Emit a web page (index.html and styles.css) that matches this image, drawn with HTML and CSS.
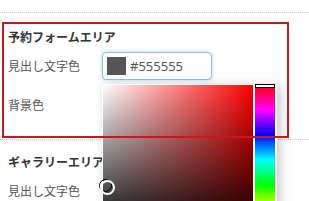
FILE: index.html
```html
<!DOCTYPE html>
<html>
	<head>
		<meta charset="utf-8">
		<title>デザイン設定</title>
		<link rel="stylesheet" href="styles.css">
	</head>
	<body>
		<div class="settings">
			<div class="section">
				<h3 class="title">予約フォームエリア</h3>
				<div class="row">
					<label class="label">見出し文字色</label>
					<div class="color">
						<span class="swatch" style="background:#555555"></span>
						<span class="value">#555555</span>
						<div class="picker">
							<div class="grid">
								<span class="grid-cursor" style="left:2px;top:100px"></span>
							</div>
							<div class="hue">
								<span class="hue-cursor"></span>
							</div>
						</div>
					</div>
				</div>
				<div class="row">
					<label class="label">背景色</label>
					<div class="color color-plain">
						<span class="swatch" style="background:#ffffff"></span>
						<span class="value">#ffffff</span>
					</div>
				</div>
			</div>
			<div class="section">
				<h3 class="title">ギャラリーエリア</h3>
				<div class="row">
					<label class="label">見出し文字色</label>
					<div class="color color-plain">
						<span class="swatch" style="background:#333333"></span>
						<span class="value">#333333</span>
					</div>
				</div>
			</div>
			<div class="mark"></div>
		</div>
	</body>
</html>
```

FILE: styles.css
```css
*{
	margin: 0px;
	padding: 0px;
	box-sizing: border-box;
}
body{
	background: #fff;
	font-family: "Noto Sans CJK JP", "Noto Sans", sans-serif;
	color: #555;
}
.settings{
	position: relative;
	padding-top: 12px;
	height: 201px;
	overflow: hidden;
}
.section{
	border-top: 1px dotted #c8c8c8;
	padding: 13px 8px 20px;
}
.section:first-child{
	padding-top: 15px;
}
.title{
	font-size: 12px;
	line-height: 18px;
	font-weight: bold;
	color: #333;
	margin-bottom: 6px;
}
.row{
	display: flex;
	align-items: center;
	margin-bottom: 11px;
}
.row:last-child{
	margin-bottom: 0;
}
.label{
	width: 94px;
	font-size: 12px;
	line-height: 18px;
}
.color{
	position: relative;
	width: 110px;
	height: 28px;
	border: 1px solid #8fbde6;
	border-radius: 4px;
	box-shadow: 0 0 4px rgba(102, 163, 224, .45);
	background: #fff;
	display: flex;
	align-items: center;
	padding-left: 4px;
}
.color-plain{
	border-color: #ccc;
	box-shadow: none;
}
.swatch{
	width: 19px;
	height: 18px;
	margin-right: 4px;
}
.value{
	font-family: "Noto Sans", sans-serif;
	font-size: 13px;
	color: #555;
}
.picker{
	position: absolute;
	left: -1px;
	top: 31px;
	z-index: 5;
	display: flex;
	gap: 2px;
	padding: 1px 2px 1px 1px;
	background: #fff;
	box-shadow: 3px 2px 10px rgba(0, 0, 0, .22);
}
.grid{
	position: relative;
	width: 150px;
	height: 150px;
	background: linear-gradient(to top, #000, rgba(0, 0, 0, 0)), linear-gradient(to right, #fff, #f00);
}
.grid-cursor{
	position: absolute;
	width: 13px;
	height: 13px;
	margin: -6px 0 0 -6px;
	border: 1px solid #000;
	border-radius: 50%;
}
.grid-cursor::after{
	content: "";
	display: block;
	width: 11px;
	height: 11px;
	border: 2px solid #fff;
	border-radius: 50%;
}
.hue{
	position: relative;
	width: 20px;
	height: 150px;
	background: linear-gradient(to bottom, #f00 0%, #f0f 16.66%, #00f 33.33%, #0ff 50%, #0f0 66.66%, #ff0 83.33%, #f00 100%);
}
.hue-cursor{
	position: absolute;
	left: 0;
	top: -1px;
	width: 20px;
	height: 4px;
	border: 1px solid #000;
	background: #fff;
}
.mark{
	position: absolute;
	left: 2px;
	top: 22px;
	width: 287px;
	height: 116px;
	border: 2px solid #c8171d;
	z-index: 10;
	pointer-events: none;
}
```
